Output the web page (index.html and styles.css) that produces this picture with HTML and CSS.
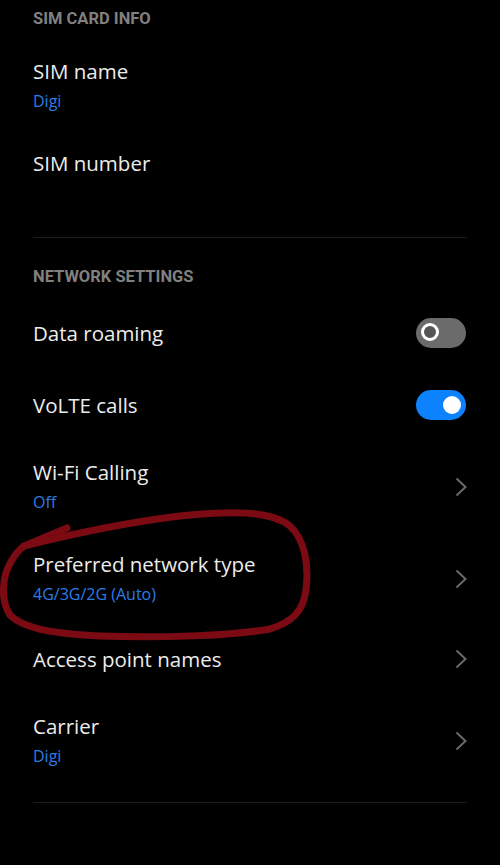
FILE: index.html
```html
<!DOCTYPE html>
<html lang="en">
<head>
    <meta charset="UTF-8">
    <meta name="viewport" content="width=device-width, initial-scale=1.0">
    <title>SIM card settings</title>
    <link rel="stylesheet" href="styles.css">
</head>
<body>

    <div class="section">
        <div class="header first">SIM CARD INFO</div>
        <div class="row two">
            <div class="text">
                <div class="title">SIM name</div>
                <div class="summary">Digi</div>
            </div>
        </div>
        <div class="row two">
            <div class="text">
                <div class="title">SIM number</div>
                <div class="summary"></div>
            </div>
        </div>
    </div>

    <div class="divider"></div>

    <div class="section">
        <div class="header">NETWORK SETTINGS</div>
        <div class="row">
            <div class="text">
                <div class="title">Data roaming</div>
            </div>
            <div class="toggle"><span class="knob"></span></div>
        </div>
        <div class="row">
            <div class="text">
                <div class="title">VoLTE calls</div>
            </div>
            <div class="toggle on"><span class="knob"></span></div>
        </div>
        <div class="row two">
            <div class="text">
                <div class="title">Wi-Fi Calling</div>
                <div class="summary">Off</div>
            </div>
            <svg class="chevron" viewBox="0 0 12 20"><path d="M1.5 1.5 L10.5 10 L1.5 18.5"/></svg>
        </div>
        <div class="row two">
            <div class="text">
                <div class="title">Preferred network type</div>
                <div class="summary">4G/3G/2G (Auto)</div>
            </div>
            <svg class="chevron" viewBox="0 0 12 20"><path d="M1.5 1.5 L10.5 10 L1.5 18.5"/></svg>
        </div>
        <div class="row short">
            <div class="text">
                <div class="title">Access point names</div>
            </div>
            <svg class="chevron" viewBox="0 0 12 20"><path d="M1.5 1.5 L10.5 10 L1.5 18.5"/></svg>
        </div>
        <div class="row two last">
            <div class="text">
                <div class="title">Carrier</div>
                <div class="summary">Digi</div>
            </div>
            <svg class="chevron" viewBox="0 0 12 20"><path d="M1.5 1.5 L10.5 10 L1.5 18.5"/></svg>
        </div>
    </div>

    <div class="divider"></div>

    <!-- hand-drawn marker circle over the screenshot -->
    <svg class="scribble" viewBox="0 0 500 865">
        <path d="M67 528 L24 546"/>
        <path d="M24 546 C80 532 130 522 180 516 C230 511 270 510 290 526 C305 540 309 565 306 590 C303 612 292 622 270 629 C230 636 160 638 100 636 C60 634 25 630 10 615 C0 600 2 575 12 560 C16 553 20 549 24 546"/>
    </svg>

</body>
</html>
```

FILE: styles.css
```css
body {
    margin: 0;
    background: #000;
    font-family: "Open Sans", Roboto, sans-serif;
    position: relative;
    width: 500px;
    height: 865px;
    overflow: hidden;
}
.section {
    padding: 0 33px;
}
.header {
    color: #808080;
    font-family: Roboto, sans-serif;
    font-size: 16.5px;
    font-weight: bold;
    line-height: 24px;
    padding-top: 27px;
    padding-bottom: 8px;
}
.header.first {
    padding-top: 7px;
    padding-bottom: 9px;
}
.row {
    display: flex;
    align-items: center;
    min-height: 72px;
}
.row.two {
    min-height: 92px;
}
.row.short {
    min-height: 68px;
}
.row.last {
    min-height: 96px;
}
.text {
    flex: 1;
}
.title {
    color: #ececec;
    font-size: 20.5px;
    line-height: 30px;
}
.summary {
    color: #2a7de6;
    font-size: 16px;
    line-height: 30px;
    min-height: 30px;
}
.divider {
    height: 1px;
    background: #1c1c1c;
    margin: 13px 33px 0;
}
.toggle {
    width: 50px;
    height: 30px;
    border-radius: 15px;
    background: #6b6b6b;
    position: relative;
    margin-right: 1px;
}
.knob {
    position: absolute;
    left: 6px;
    top: 6px;
    width: 12px;
    height: 12px;
    border: 3px solid #fff;
    border-radius: 50%;
    background: #555;
    margin: -1px;
}
.toggle.on {
    background: #0c82ff;
}
.toggle.on .knob {
    left: 27px;
    top: 6px;
    width: 18px;
    height: 18px;
    border: none;
    margin: 0;
    background: #fff;
}
.chevron {
    width: 12px;
    height: 20px;
    fill: none;
    stroke: #6a6a6a;
    stroke-width: 2;
}
.scribble {
    position: absolute;
    left: 0;
    top: 0;
    width: 500px;
    height: 865px;
    pointer-events: none;
    fill: none;
    stroke: #7b0a13;
    stroke-width: 7;
    stroke-linecap: round;
    stroke-linejoin: round;
}
```
